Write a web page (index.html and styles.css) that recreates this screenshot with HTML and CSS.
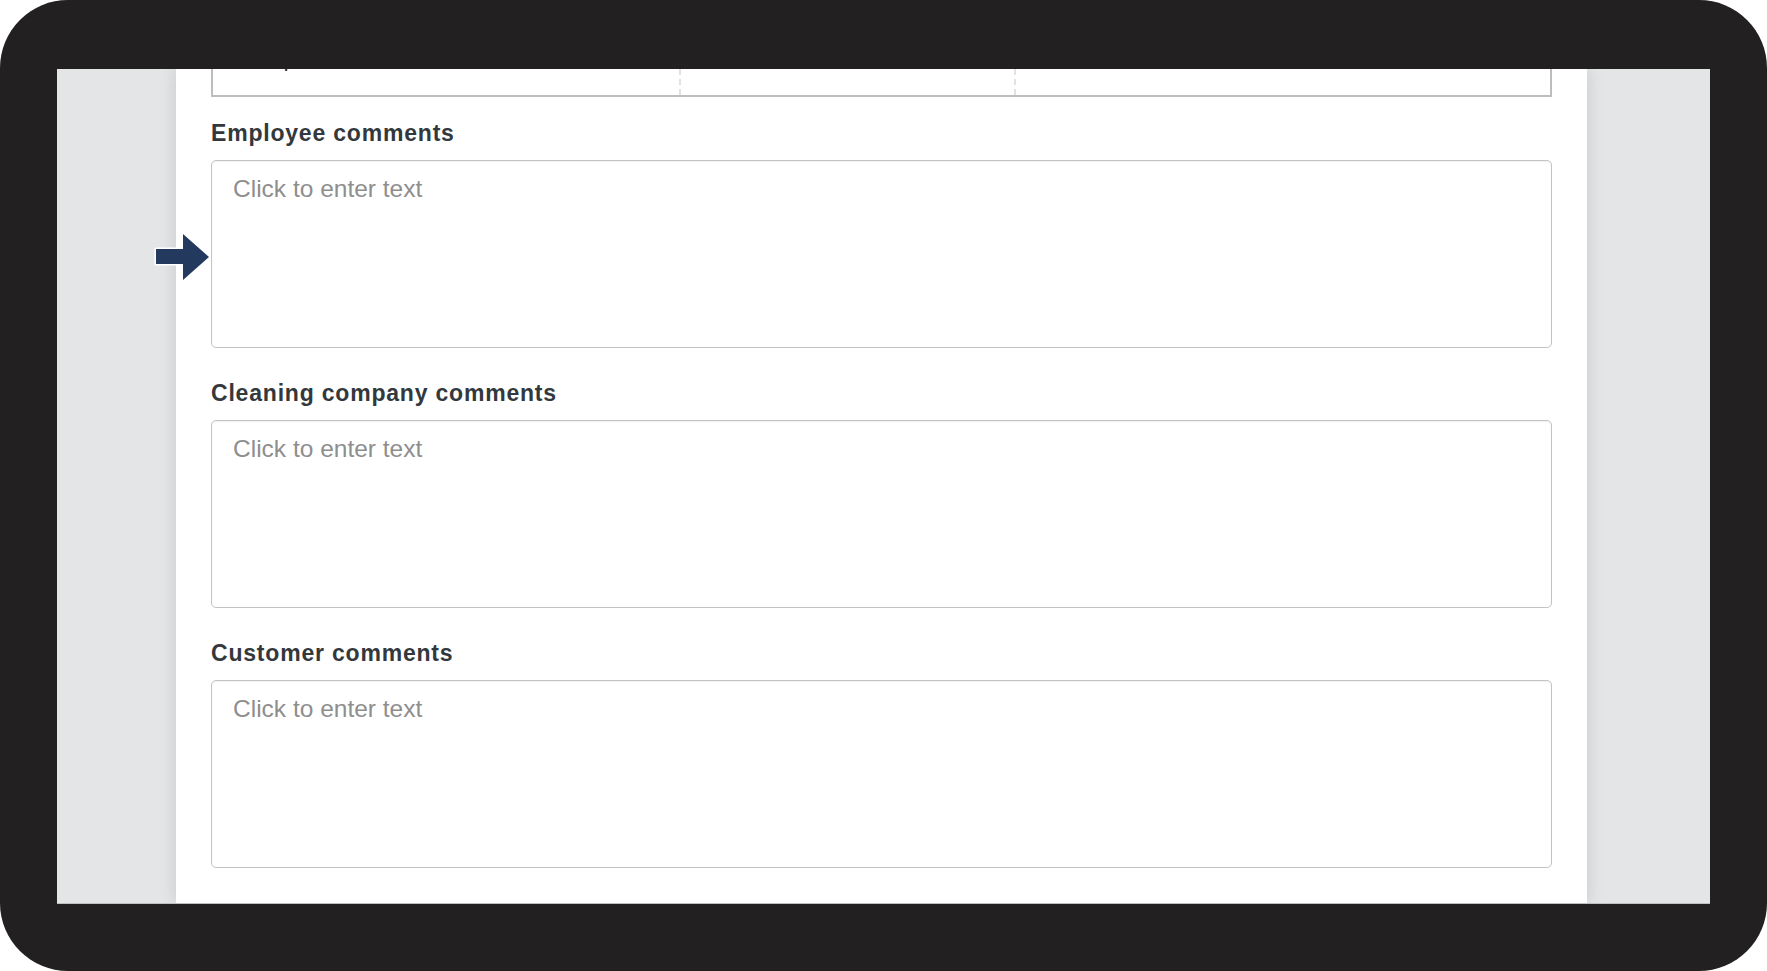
FILE: index.html
```html
<!DOCTYPE html>
<html lang="en">

<head>
  <meta charset="UTF-8">
  <title>Cleaning inspection</title>
  <link rel="stylesheet" href="styles.css">
</head>

<body>

  <div class="device">
    <div class="screen">
      <div class="page">

        <!-- end of the table above, scrolled mostly out of view -->
        <div class="summary">
          <div class="cell">Completed</div>
          <div class="cell"></div>
          <div class="cell"></div>
        </div>

        <div class="field">
          <label for="employeeComments">Employee comments</label>
          <div class="input-wrap">
            <svg class="pointer" viewBox="0 0 58 50" width="58" height="50">
              <path d="M3 17 H30 V2 L56 25 L30 48 V32 H3 Z" fill="#233a5e" stroke="#fff" stroke-width="3"
                stroke-linejoin="round" paint-order="stroke" />
            </svg>
            <textarea id="employeeComments" placeholder="Click to enter text"></textarea>
          </div>
        </div>

        <div class="field">
          <label for="cleaningComments">Cleaning company comments</label>
          <div class="input-wrap">
            <textarea id="cleaningComments" placeholder="Click to enter text"></textarea>
          </div>
        </div>

        <div class="field">
          <label for="customerComments">Customer comments</label>
          <div class="input-wrap">
            <textarea id="customerComments" placeholder="Click to enter text"></textarea>
          </div>
        </div>

      </div>
    </div>
  </div>

</body>

</html>
```

FILE: styles.css
```css
html,
body {
  margin: 0;
  background: #fff;
}

body {
  font-family: 'Liberation Sans', Arial, sans-serif;
}

.device {
  box-sizing: border-box;
  width: 1767px;
  height: 971px;
  padding: 69px 57px 67px 57px;
  background: #222021;
  border-radius: 68px;
  display: flex;
}

.screen {
  flex: 1;
  display: flex;
  padding-left: 119px;
  background: #e4e5e7;
  border-bottom: 1px solid #bfbfbf;
  overflow: hidden;
}

.page {
  box-sizing: border-box;
  width: 1411px;
  padding: 0 35px;
  background: #fff;
  box-shadow: 0 0 16px rgba(0, 0, 0, 0.13);
}

.summary {
  box-sizing: border-box;
  height: 60px;
  margin-top: -32px;
  display: grid;
  grid-template-columns: 466px 335px 1fr;
  border: 2px solid #bdbdbd;
}

.cell {
  padding: 6px 20px 0 22px;
  font-size: 23px;
  line-height: 26px;
  color: #333;
}

.cell + .cell {
  border-left: 2px dashed #e2e2e2;
}

.field {
  margin-top: 31px;
}

.summary + .field {
  margin-top: 22px;
}

label {
  display: block;
  margin-bottom: 13px;
  font-size: 23px;
  line-height: 28px;
  font-weight: bold;
  letter-spacing: 0.8px;
  color: #33383d;
}

.input-wrap {
  position: relative;
}

.pointer {
  position: absolute;
  left: -58px;
  top: 72px;
}

textarea {
  display: block;
  box-sizing: border-box;
  width: 100%;
  height: 188px;
  padding: 14px 21px;
  border: 1px solid #c3c3c3;
  border-radius: 5px;
  box-shadow: inset 0 1px 2px rgba(0, 0, 0, 0.06);
  font-family: 'Liberation Sans', Arial, sans-serif;
  font-size: 24.5px;
  line-height: 28px;
  color: #333;
  resize: none;
  outline: none;
}

textarea::placeholder {
  color: #8e8e8e;
}
```
